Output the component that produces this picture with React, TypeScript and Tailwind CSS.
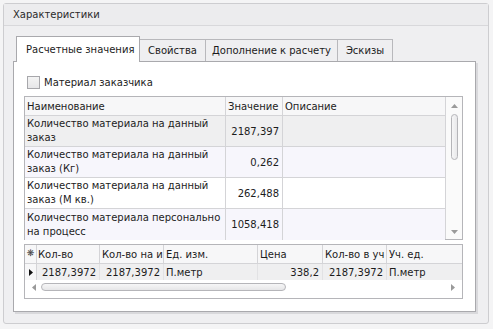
import React from "react";

const F = { fontFamily: "'DejaVu Sans', 'Liberation Sans', sans-serif" };

function UpArrow() {
  return (
    <svg width="7" height="4" viewBox="0 0 7 4"><path d="M0 4 L3.5 0 L7 4 Z" fill="#9a9a9a" /></svg>
  );
}
function DownArrow() {
  return (
    <svg width="7" height="4" viewBox="0 0 7 4"><path d="M0 0 L3.5 4 L7 0 Z" fill="#9a9a9a" /></svg>
  );
}
function LeftArrow() {
  return (
    <svg width="4" height="7" viewBox="0 0 4 7"><path d="M4 0 L0 3.5 L4 7 Z" fill="#9a9a9a" /></svg>
  );
}
function RightArrow() {
  return (
    <svg width="4" height="7" viewBox="0 0 4 7"><path d="M0 0 L4 3.5 L0 7 Z" fill="#9a9a9a" /></svg>
  );
}

const rows = [
  { name: ["Количество материала на данный", "заказ"], value: "2187,397", bg: "bg-[#efeff0]" },
  { name: ["Количество материала на данный", "заказ (Кг)"], value: "0,262", bg: "bg-[#f7f6fc]" },
  { name: ["Количество материала на данный", "заказ (М кв.)"], value: "262,488", bg: "bg-white" },
  { name: ["Количество материала персонально", "на процесс"], value: "1058,418", bg: "bg-[#f7f6fc]" },
];

export default function App() {
  return (
    <div className="w-[493px] h-[329px] bg-[#f4f4f5] pt-[3px] pl-[3px] pr-[4px] pb-[5px] text-[10px] text-[#1c1c1c] whitespace-nowrap" style={F}>
      <div className="h-full border border-[#cdcdd0] rounded-[3px] bg-[#efeff1] flex flex-col">
        <div className="h-[22px] shrink-0 bg-[#ececee] border-b border-[#d8d8db] flex items-center pl-[9px] text-[#2a2a2a]">
          Характеристики
        </div>
        <div className="pt-[10px] pl-[9px] pr-[12px] flex flex-col">
          {/* tabs */}
          <div className="flex items-end h-[25px] pl-[3px]">
            <div className="relative z-10 h-[26px] -mb-px w-[124px] bg-white border border-b-0 border-[#a9a9ad] flex items-center pl-[9px] pb-[1px]">
              Расчетные значения
            </div>
            <div className="h-[22px] w-[66px] bg-[#efeff1] border border-l-0 border-b-0 border-[#b8b8bc] flex items-center justify-center">
              Свойства
            </div>
            <div className="h-[22px] w-[132px] bg-[#efeff1] border border-l-0 border-b-0 border-[#b8b8bc] flex items-center justify-center">
              Дополнение к расчету
            </div>
            <div className="h-[22px] w-[55px] bg-[#efeff1] border border-l-0 border-b-0 border-[#b8b8bc] flex items-center justify-center">
              Эскизы
            </div>
          </div>
          {/* panel */}
          <div className="h-[251px] bg-white border border-[#a9a9ad] shadow-[2px_2px_0_#d9d9dc] pt-[14px] pl-[10px] pr-[12px] flex flex-col">
            <div className="flex items-center h-[13px] pl-[3px] gap-[4px]">
              <div className="w-[13px] h-[13px] border border-[#a7a7ab] bg-[linear-gradient(#f4f4f4,#e6e6e8)]" />
              <span>Материал заказчика</span>
            </div>
            {/* upper grid */}
            <div className="mt-[7px] h-[144px] border border-[#b5b5b9] flex">
              <div className="flex-1 flex flex-col">
                <div className="h-[19px] shrink-0 flex bg-[#f7f7f8] border-b border-[#d4d4d7]">
                  <div className="w-[201px] border-r border-[#d4d4d7] pl-[2px] flex items-center">Наименование</div>
                  <div className="w-[57px] border-r border-[#d4d4d7] pl-[2px] flex items-center overflow-hidden">Значение</div>
                  <div className="flex-1 pl-[2px] flex items-center">Описание</div>
                </div>
                {rows.map((r, i) => (
                  <div key={i} className={`h-[31px] shrink-0 flex ${r.bg} ${i < 3 ? "border-b border-[#d4d4d7]" : ""}`}>
                    <div className="w-[201px] border-r border-[#d4d4d7] pl-[2px] flex flex-col justify-center leading-[14px] overflow-hidden">
                      <span>{r.name[0]}</span>
                      <span>{r.name[1]}</span>
                    </div>
                    <div className="w-[57px] border-r border-[#d4d4d7] pr-[3px] flex items-center justify-end">{r.value}</div>
                    <div className="flex-1" />
                  </div>
                ))}
              </div>
              <div className="w-[17px] border-l border-[#d4d4d7] bg-[#fafafa] flex flex-col items-center">
                <div className="h-[17px] flex items-center justify-center"><UpArrow /></div>
                <div className="w-[7px] h-[46px] rounded-full border border-[#b5b5b9] bg-[linear-gradient(90deg,#f6f6f7,#e8e8ea)]" />
                <div className="flex-1" />
                <div className="h-[15px] flex items-center justify-center"><DownArrow /></div>
              </div>
            </div>
            {/* lower grid */}
            <div className="mt-[4px] h-[55px] border border-[#b5b5b9] flex flex-col">
              <div className="h-[19px] shrink-0 flex bg-[#f7f7f8] border-b border-[#d4d4d7]">
                <div className="w-[12px] border-r border-[#d4d4d7] flex items-center justify-center text-[9px] text-[#444]">❋</div>
                <div className="w-[63px] border-r border-[#d4d4d7] pl-[1px] flex items-center">Кол-во</div>
                <div className="w-[64px] border-r border-[#d4d4d7] pl-[2px] flex items-center overflow-hidden">Кол-во на и</div>
                <div className="w-[94px] border-r border-[#d4d4d7] pl-[2px] flex items-center">Ед. изм.</div>
                <div className="w-[65px] border-r border-[#d4d4d7] pl-[2px] flex items-center">Цена</div>
                <div className="w-[64px] border-r border-[#d4d4d7] pl-[2px] flex items-center overflow-hidden">Кол-во в уч</div>
                <div className="flex-1 pl-[2px] flex items-center">Уч. ед.</div>
              </div>
              <div className="h-[16px] shrink-0 flex bg-[#efeff0]">
                <div className="w-[12px] border-r border-[#d4d4d7] bg-[#f7f7f8] flex items-center justify-center">
                  <svg width="4" height="7" viewBox="0 0 4 7"><path d="M0 0 L4 3.5 L0 7 Z" fill="#111" /></svg>
                </div>
                <div className="w-[63px] border-r border-[#e2e2e4] pr-[3px] flex items-center justify-end">2187,3972</div>
                <div className="w-[64px] border-r border-[#e2e2e4] pr-[3px] flex items-center justify-end">2187,3972</div>
                <div className="w-[94px] border-r border-[#e2e2e4] pl-[2px] flex items-center">П.метр</div>
                <div className="w-[65px] border-r border-[#e2e2e4] pr-[3px] flex items-center justify-end">338,2</div>
                <div className="w-[64px] border-r border-[#e2e2e4] pr-[3px] flex items-center justify-end">2187,3972</div>
                <div className="flex-1 pl-[2px] flex items-center">П.метр</div>
              </div>
              <div className="h-[14px] shrink-0 flex items-center bg-white pl-[7px] pr-[7px]">
                <LeftArrow />
                <div className="ml-[5px] w-[245px] h-[8px] rounded-full border border-[#b5b5b9] bg-[linear-gradient(#f6f6f7,#e6e6e8)]" />
                <div className="flex-1" />
                <RightArrow />
              </div>
              <div className="flex-1 bg-white" />
            </div>
          </div>
        </div>
      </div>
    </div>
  );
}
